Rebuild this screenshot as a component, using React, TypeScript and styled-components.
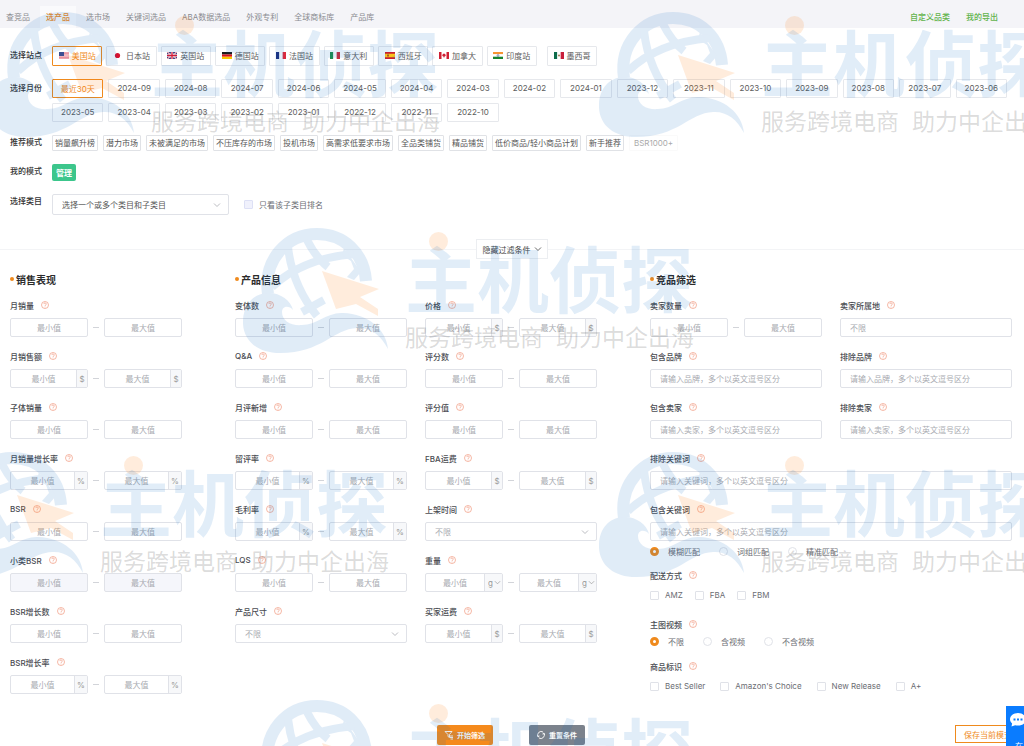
import React, { useState } from "react";
import styled, { createGlobalStyle, css } from "styled-components";

const orange = "#ef8a1d";
const line = "#e0e2e8";

const GlobalStyle = createGlobalStyle`
  *, *::before, *::after { box-sizing: border-box; }
  body { margin: 0; background: #fff; }
  body, button, input, select {
    font-family: Inter, "Noto Sans CJK SC", sans-serif;
    font-size: 8px;
  }
  button { cursor: pointer; }
`;

const Page = styled.div`
  position: relative;
  min-height: 100vh;
  overflow: hidden;
  color: #555;
`;

/* ---------- header ---------- */

const Header = styled.header`
  display: flex;
  justify-content: space-between;
  height: 28px;
  padding: 6px 26px 0 6px;
  background: #f4f4f8;
`;

const Nav = styled.nav`
  display: flex;
  gap: 16px;
`;

const NavLink = styled.a<{ $active?: boolean; $accent?: boolean }>`
  line-height: 22px;
  color: #8a8b90;
  text-decoration: none;
  white-space: nowrap;
  ${(p) => p.$active && css`
    color: ${orange};
    font-weight: 500;
    background: #fafafc;
    box-shadow: 0 0 0 6px #fafafc;
    clip-path: inset(0 -6px);
  `}
  ${(p) => p.$accent && css`
    color: #62b34c;
    font-weight: 500;
  `}
`;

/* ---------- filter rows ---------- */

const Filters = styled.section`
  display: flex;
  flex-direction: column;
  gap: 13px;
  padding: 18px 17px 0 10px;
`;

const FilterRow = styled.div`
  display: grid;
  grid-template-columns: 32px minmax(0, 1fr);
  column-gap: 10px;
  align-items: start;
`;

const RowLabel = styled.span<{ $tall?: boolean }>`
  line-height: ${(p) => (p.$tall ? 19 : 15)}px;
  font-weight: 500;
  color: #333;
  white-space: nowrap;
`;

const SiteList = styled.div`
  display: flex;
  gap: 10px;
`;

const SiteGroup = styled.div`
  display: grid;
  grid-template-columns: repeat(9, 1fr);
  gap: 4px;
  width: 485px;
`;

const chip = css<{ $active?: boolean }>`
  padding: 0 0 1px;
  border: 1px solid ${(p) => (p.$active ? orange : "#e6e8ec")};
  border-radius: 1px;
  background: #fff;
  color: ${(p) => (p.$active ? orange : "#5c5c5c")};
  white-space: nowrap;
`;

const SiteButton = styled.button<{ $active?: boolean }>`
  ${chip}
  display: flex;
  align-items: center;
  justify-content: center;
  gap: 3px;
  min-width: 50px;
  height: 20px;
`;

const MonthGrid = styled.div`
  display: grid;
  grid-template-columns: repeat(17, 1fr);
  gap: 5px;
`;

const MonthButton = styled.button<{ $active?: boolean }>`
  ${chip}
  height: 19px;
`;

const ModeList = styled.div`
  display: flex;
  flex-wrap: wrap;
  gap: 5px;
`;

const ModeButton = styled.button<{ $muted?: boolean }>`
  height: 16px;
  padding: 0 ${(p) => (p.$muted ? 4 : 2)}px;
  border: 1px solid ${(p) => (p.$muted ? "#fafafa" : "#e0e2e6")};
  border-radius: 1px;
  background: #fff;
  color: ${(p) => (p.$muted ? "#aaa" : "#555")};
  line-height: 14px;
  white-space: nowrap;
`;

const ManageButton = styled.button`
  justify-self: start;
  width: 24px;
  height: 17px;
  padding: 0;
  border: 0;
  border-radius: 2px;
  background: #3cc68c;
  color: #fff;
  font-weight: 700;
`;

const CategoryRow = styled.div`
  display: flex;
  align-items: center;
  gap: 15px;
`;

/* ---------- collapse bar ---------- */

const CollapseBar = styled.div`
  display: flex;
  align-items: center;
  margin: 24px 0 12px;
  &::before, &::after {
    content: "";
    flex: 1;
    height: 1px;
    background: #f3f4f6;
  }
`;

const CollapseButton = styled.button`
  display: flex;
  align-items: center;
  justify-content: center;
  gap: 3px;
  width: 72px;
  height: 20px;
  padding: 0;
  border: 1px solid #eceef1;
  background: #fff;
  color: #444;
`;

/* ---------- form sections ---------- */

const Sections = styled.main`
  display: grid;
  grid-template-columns: minmax(0, 172fr) minmax(0, 362fr) minmax(0, 362fr);
  column-gap: 53px;
  padding: 0 12px 0 10px;
`;

const SectionTitle = styled.h2`
  display: flex;
  align-items: center;
  gap: 2px;
  height: 16px;
  margin: 0 0 12px;
  font-size: 10px;
  font-weight: 600;
  color: #2b2b2b;
  &::before {
    content: "";
    width: 4px;
    height: 4px;
    border-radius: 50%;
    background: ${orange};
  }
`;

const FieldColumns = styled.div`
  display: grid;
  grid-template-columns: repeat(2, minmax(0, 1fr));
  column-gap: 18px;
  align-items: start;
`;

const Field = styled.div<{ $last?: boolean }>`
  margin-bottom: ${(p) => (p.$last ? 4 : 13)}px;
`;

const FieldLabel = styled.label`
  display: flex;
  align-items: center;
  gap: 7px;
  height: 12px;
  font-weight: 500;
  color: #4a4c52;
  white-space: nowrap;
`;

const Control = styled.div`
  margin-top: 7px;
`;

const Range = styled.div`
  display: flex;
  align-items: center;
  gap: 5px;
  margin-top: 7px;
  color: #aaa;
`;

const Dash = styled.span`
  width: 6px;
  height: 1px;
  background: #d2d4d9;
`;

const Box = styled.div<{ $disabled?: boolean }>`
  display: flex;
  flex: 1;
  min-width: 0;
  height: 19px;
  border: 1px solid ${line};
  border-radius: 2px;
  overflow: hidden;
  background: ${(p) => (p.$disabled ? "#f5f6fb" : "#fff")};
`;

const Input = styled.input<{ $left?: boolean }>`
  flex: 1;
  width: 100%;
  min-width: 0;
  padding: ${(p) => (p.$left ? "0 9px" : "0")};
  border: 0;
  outline: 0;
  background: transparent;
  color: #555;
  text-align: ${(p) => (p.$left ? "left" : "center")};
  &::placeholder { color: #a9abb1; opacity: 1; }
`;

const Unit = styled.span<{ $wide?: boolean }>`
  display: flex;
  align-items: center;
  justify-content: center;
  width: ${(p) => (p.$wide ? 13 : 11)}px;
  border-left: 1px solid ${line};
  background: #f7f8fa;
  color: #999;
`;

const SelectWrap = styled.div<{ $large?: boolean }>`
  position: relative;
  display: flex;
  width: ${(p) => (p.$large ? "177px" : "100%")};
  height: ${(p) => (p.$large ? 21 : 19)}px;
  border: 1px solid ${line};
  border-radius: 2px;
  background: #fff;
  color: ${(p) => (p.$large ? "#555" : "#a9abb1")};
  svg {
    position: absolute;
    right: 7px;
    top: 50%;
    margin-top: -4px;
    color: #a9abb1;
    pointer-events: none;
  }
`;

const Select = styled.select`
  flex: 1;
  appearance: none;
  padding: 0 9px;
  border: 0;
  outline: 0;
  background: transparent;
  color: inherit;
`;

const UnitSelectWrap = styled.div`
  display: flex;
  align-items: center;
  width: 18px;
  padding-left: 3px;
  border-left: 1px solid ${line};
  background: #f7f8fa;
  color: #999;
`;

const UnitSelect = styled.select`
  appearance: none;
  width: 6px;
  padding: 0;
  border: 0;
  background: transparent;
  color: inherit;
`;

const OptionGroup = styled.fieldset<{ $space: number; $gap: number }>`
  min-width: 0;
  margin: ${(p) => p.$space}px 0 0;
  padding: 0;
  border: 0;
  legend {
    display: flex;
    align-items: center;
    gap: 7px;
    height: 12px;
    margin-bottom: ${(p) => p.$gap}px;
    padding: 0;
    font-weight: 500;
    color: #4a4c52;
  }
`;

const Options = styled.div<{ $gap: number }>`
  display: flex;
  gap: ${(p) => p.$gap}px;
  height: 12px;
`;

const Option = styled.label<{ $radio?: boolean }>`
  display: flex;
  align-items: center;
  gap: ${(p) => (p.$radio ? 9 : 6)}px;
  color: #6b6d73;
  white-space: nowrap;
`;

const Tick = styled.input`
  appearance: none;
  width: 9px;
  height: 9px;
  margin: 0;
  border: 1px solid ${line};
  border-radius: ${(p) => (p.type === "radio" ? "50%" : "1px")};
  background: #fff;
  &:checked {
    border: 3px solid ${orange};
  }
`;

const SoftTick = styled(Tick)`
  border-color: #dde0f5;
  background: #f0f1fc;
`;

/* ---------- footer actions ---------- */

const Actions = styled.footer`
  display: grid;
  grid-template-columns: 1fr auto 1fr;
  align-items: start;
  margin-top: 18px;
  padding: 0 3px 0 0;
`;

const MainActions = styled.div`
  grid-column: 2;
  display: flex;
  gap: 36px;
`;

const ActionButton = styled.button<{ $primary?: boolean }>`
  display: flex;
  align-items: center;
  justify-content: center;
  gap: 3px;
  width: 56px;
  height: 20px;
  padding: 0;
  border: 0;
  border-radius: 2px;
  background: ${(p) => (p.$primary ? "#f58a1c" : "#7b828c")};
  color: #fff;
  font-size: 7px;
  font-weight: 700;
`;

const SaveButton = styled.button`
  justify-self: end;
  height: 18px;
  padding: 0 8px;
  border: 1px solid ${orange};
  background: #fff;
  color: ${orange};
  white-space: nowrap;
`;

const ChatPanel = styled.button`
  position: fixed;
  right: 0;
  bottom: 0;
  z-index: 3;
  display: flex;
  flex-direction: column;
  gap: 12px;
  width: 18px;
  height: 40px;
  padding: 7px 0 0 4px;
  border: 0;
  overflow: hidden;
  background: #0a7cff;
  color: #fff;
  line-height: 14px;
  svg { flex: none; }
  span { padding-left: 4px; }
`;

/* ---------- watermark ---------- */

const WatermarkLayer = styled.div`
  position: absolute;
  inset: 0;
  z-index: 2;
  overflow: hidden;
  pointer-events: none;
  user-select: none;
`;

const Mark = styled.div<{ $x: number; $y: number }>`
  position: absolute;
  left: ${(p) => p.$x}px;
  top: ${(p) => p.$y}px;
  display: flex;
  gap: 16px;
`;

const MarkDot = styled.div`
  width: 19px;
  height: 19px;
  margin: 4px 0 -6px 24px;
  border-radius: 50%;
  background: rgba(255, 130, 20, 0.15);
`;

const MarkName = styled.div`
  font-size: 72px;
  line-height: 72px;
  font-weight: 700;
  color: rgba(9, 103, 196, 0.12);
  white-space: nowrap;
`;

const MarkSlogan = styled.div`
  display: flex;
  gap: 13px;
  margin-top: 9px;
  font-size: 23px;
  line-height: 24px;
  font-weight: 400;
  color: rgba(100, 100, 100, 0.23);
  white-space: nowrap;
`;

/* ---------- drawings ---------- */

const Chevron = ({ size = 8 }: { size?: number }) => (
  <svg width={size} height={size} viewBox="0 0 8 8" fill="none" stroke="currentColor" strokeWidth="0.8">
    <path d="M1 2.5 4 5.5 7 2.5" />
  </svg>
);

const Help = () => (
  <svg width="8" height="8" viewBox="0 0 16 16" fill="none" stroke="#f09a80" strokeWidth="1.4">
    <circle cx="8" cy="8" r="7" />
    <path d="M5.6 6.2a2.4 2.4 0 1 1 3.4 2.2c-.7.4-1 .7-1 1.6M8 11.2v1.4" />
  </svg>
);

const flags: Record<string, React.ReactNode> = {
  us: (
    <>
      <path fill="#fff" d="M0 0h20v14H0z" />
      <path stroke="#d8455a" strokeWidth="1.2" d="M0 .6h20M0 3.2h20M0 5.8h20M0 8.4h20M0 11h20M0 13.4h20" />
      <path fill="#3c4f92" d="M0 0h10v8H0z" />
    </>
  ),
  jp: <circle cx="9" cy="7" r="5.2" fill="#d8112d" />,
  gb: (
    <>
      <path fill="#1d2f78" d="M0 0h20v14H0z" />
      <path stroke="#fff" strokeWidth="2.8" d="m0 0 20 14M20 0 0 14" />
      <path stroke="#cf1b38" strokeWidth="1" d="m0 0 20 14M20 0 0 14" />
      <path stroke="#fff" strokeWidth="4.6" d="M10 0v14M0 7h20" />
      <path stroke="#cf1b38" strokeWidth="2.6" d="M10 0v14M0 7h20" />
    </>
  ),
  de: (
    <>
      <path fill="#1b1b1b" d="M0 0h20v5H0z" />
      <path fill="#d8121f" d="M0 5h20v4.500H0z" />
      <path fill="#f8c600" d="M0 9.500h20V14H0z" />
    </>
  ),
  fr: (
    <>
      <path fill="#1c2d7c" d="M0 0h6.700v14H0z" />
      <path fill="#fff" d="M6.700 0h6.600v14H6.700z" />
      <path fill="#dd2a3c" d="M13.300 0H20v14h-6.700z" />
    </>
  ),
  it: (
    <>
      <path fill="#1d8d4c" d="M0 0h6.700v14H0z" />
      <path fill="#fff" d="M6.700 0h6.600v14H6.700z" />
      <path fill="#cc2c3b" d="M13.300 0H20v14h-6.700z" />
    </>
  ),
  es: (
    <>
      <path fill="#c8202f" d="M0 0h20v14H0z" />
      <path fill="#fbc21b" d="M0 3.500h20v7H0z" />
      <path fill="#a8572a" d="M4 5h4v4H4z" />
    </>
  ),
  ca: (
    <>
      <path fill="#fff" d="M0 0h20v14H0z" />
      <path fill="#cf1f33" d="M0 0h5v14H0zM15 0h5v14h-5zM10 2l1 2 2 0-.6 2L14 7l-3 2.500h-.6V12h-.8V9.500H9L6 7l1.600-1L7 4l2 0z" />
    </>
  ),
  in: (
    <>
      <path fill="#f79433" d="M0 0h20v4.600H0z" />
      <path fill="#fff" d="M0 4.600h20v4.800H0z" />
      <path fill="#17842f" d="M0 9.400h20V14H0z" />
      <circle cx="10" cy="7" r="1.800" fill="none" stroke="#23357f" />
    </>
  ),
  mx: (
    <>
      <path fill="#0d6c4b" d="M0 0h6.700v14H0z" />
      <path fill="#fff" d="M6.700 0h6.600v14H6.700z" />
      <path fill="#c81f39" d="M13.300 0H20v14h-6.700z" />
      <circle cx="10" cy="7" r="2" fill="#9c7a4c" />
    </>
  ),
};

const Flag = ({ code }: { code: string }) => (
  <svg width="10" height="7" viewBox="0 0 20 14">{flags[code]}</svg>
);

const MarkLogo = () => (
  <svg width="146" height="126" viewBox="0 0 146 126" fill="none">
    <g opacity="0.12" stroke="#0967c4">
      <path strokeWidth="12" d="M25 66C20 32 44 6 74 6c27 0 47 19 49 47" />
      <path
        strokeWidth="8"
        d="M45 19c3 27 12 48 29 69M64 12c5 10 12 20 21 27M29 59c19-18 47-30 82-33M59 84l22-12"
      />
      <path fill="#0967c4" stroke="none" d="M101 20l17 24-7 8-7-3 7-8-3-8-9-6z" />
      <path
        fill="#0967c4"
        stroke="none"
        d="M0 92C1 76 10 66 24 65c12-1 24 7 26 17-4-5-11-4-11 2 0 9 9 14 20 13 15 0 25-13 41-12 25 1 43 16 45 36-7-14-18-22-31-21-24 1-35 25-77 25C14 125-1 112 0 92z"
      />
    </g>
    <path fill="#ff8214" opacity="0.15" d="M79 43l57 18-19 8 18 12v7l-22-12-20 5z" />
  </svg>
);

/* ---------- composed parts ---------- */

type UnitName = "$" | "%" | "g";

const UnitCell = ({ unit }: { unit: UnitName }) =>
  unit === "g" ? (
    <UnitSelectWrap>
      <UnitSelect aria-label="单位"><option>g</option></UnitSelect>
      <Chevron size={7} />
    </UnitSelectWrap>
  ) : (
    <Unit $wide={unit === "%"}>{unit}</Unit>
  );

const RangeField = ({ label, unit, disabled }: { label: string; unit?: UnitName; disabled?: boolean }) => (
  <Field>
    <FieldLabel htmlFor={label}>{label}<Help /></FieldLabel>
    <Range>
      <Box $disabled={disabled}>
        <Input id={label} placeholder="最小值" disabled={disabled} />
        {unit && <UnitCell unit={unit} />}
      </Box>
      <Dash />
      <Box $disabled={disabled}>
        <Input aria-label={label + "最大值"} placeholder="最大值" disabled={disabled} />
        {unit && <UnitCell unit={unit} />}
      </Box>
    </Range>
  </Field>
);

const SelectField = ({ label }: { label: string }) => (
  <Field>
    <FieldLabel htmlFor={label}>{label}<Help /></FieldLabel>
    <Control>
      <SelectWrap>
        <Select id={label}><option>不限</option></Select>
        <Chevron />
      </SelectWrap>
    </Control>
  </Field>
);

const TextField = ({ label, hint, last }: { label: string; hint: string; last?: boolean }) => (
  <Field $last={last}>
    <FieldLabel htmlFor={label}>{label}<Help /></FieldLabel>
    <Control>
      <Box><Input $left id={label} placeholder={hint} /></Box>
    </Control>
  </Field>
);

const RadioOptions = ({ name, items }: { name: string; items: string[] }) => (
  <Options $gap={19}>
    {items.map((item, i) => (
      <Option $radio key={item}>
        <Tick type="radio" name={name} defaultChecked={i === 0} />{item}
      </Option>
    ))}
  </Options>
);

const CheckOptions = ({ items, gap }: { items: string[]; gap: number }) => (
  <Options $gap={gap}>
    {items.map((item) => (
      <Option key={item}><Tick type="checkbox" />{item}</Option>
    ))}
  </Options>
);

const Watermark = ({ x, y }: { x: number; y: number }) => (
  <Mark $x={x} $y={y}>
    <MarkLogo />
    <div>
      <MarkDot />
      <MarkName>主机侦探</MarkName>
      <MarkSlogan><span>服务跨境电商</span><span>助力中企出海</span></MarkSlogan>
    </div>
  </Mark>
);

/* ---------- data ---------- */

const navItems = ["查竞品", "选产品", "选市场", "关键词选品", "ABA数据选品", "外观专利", "全球商标库", "产品库"];

const sites = [
  ["us", "美国站"], ["jp", "日本站"], ["gb", "英国站"], ["de", "德国站"], ["fr", "法国站"],
  ["it", "意大利"], ["es", "西班牙"], ["ca", "加拿大"], ["in", "印度站"],
];

const months = [
  "最近30天", "2024-09", "2024-08", "2024-07", "2024-06", "2024-05", "2024-04", "2024-03", "2024-02",
  "2024-01", "2023-12", "2023-11", "2023-10", "2023-09", "2023-08", "2023-07", "2023-06",
  "2023-05", "2023-04", "2023-03", "2023-02", "2023-01", "2022-12", "2022-11", "2022-10",
];

const modes = [
  "销量飙升榜", "潜力市场", "未被满足的市场", "不压库存的市场", "投机市场", "高需求低要求市场",
  "全品类铺货", "精品铺货", "低价商品/轻小商品计划", "新手推荐",
];

const marks = [[-11, 12], [599, 12], [243, 228], [-62, 452], [599, 452], [243, 700]];

export default function App() {
  const [site, setSite] = useState("us");
  const [month, setMonth] = useState("最近30天");

  return (
    <Page lang="zh-CN">
      <GlobalStyle />
      <Header>
        <Nav>
          {navItems.map((item) => (
            <NavLink href="#" key={item} $active={item === "选产品"}>{item}</NavLink>
          ))}
        </Nav>
        <Nav>
          <NavLink href="#" $accent>自定义品类</NavLink>
          <NavLink href="#" $accent>我的导出</NavLink>
        </Nav>
      </Header>

      <Filters>
        <FilterRow>
          <RowLabel $tall>选择站点</RowLabel>
          <SiteList>
            <SiteGroup>
              {sites.map(([code, name]) => (
                <SiteButton key={code} $active={site === code} onClick={() => setSite(code)}>
                  <Flag code={code} />{name}
                </SiteButton>
              ))}
            </SiteGroup>
            <SiteButton $active={site === "mx"} onClick={() => setSite("mx")}>
              <Flag code="mx" />墨西哥
            </SiteButton>
          </SiteList>
        </FilterRow>
        <FilterRow>
          <RowLabel $tall>选择月份</RowLabel>
          <MonthGrid>
            {months.map((m) => (
              <MonthButton key={m} $active={month === m} onClick={() => setMonth(m)}>{m}</MonthButton>
            ))}
          </MonthGrid>
        </FilterRow>
        <FilterRow>
          <RowLabel>推荐模式</RowLabel>
          <ModeList>
            {modes.map((m) => <ModeButton key={m}>{m}</ModeButton>)}
            <ModeButton $muted>BSR1000+</ModeButton>
          </ModeList>
        </FilterRow>
        <FilterRow>
          <RowLabel>我的模式</RowLabel>
          <ManageButton>管理</ManageButton>
        </FilterRow>
        <FilterRow>
          <RowLabel>选择类目</RowLabel>
          <CategoryRow>
            <SelectWrap $large>
              <Select aria-label="选择类目"><option>选择一个或多个类目和子类目</option></Select>
              <Chevron />
            </SelectWrap>
            <Option><SoftTick type="checkbox" />只看该子类目排名</Option>
          </CategoryRow>
        </FilterRow>
      </Filters>

      <CollapseBar>
        <CollapseButton>隐藏过滤条件<Chevron /></CollapseButton>
      </CollapseBar>

      <Sections>
        <section>
          <SectionTitle>销售表现</SectionTitle>
          <RangeField label="月销量" />
          <RangeField label="月销售额" unit="$" />
          <RangeField label="子体销量" />
          <RangeField label="月销量增长率" unit="%" />
          <RangeField label="BSR" />
          <RangeField label="小类BSR" disabled />
          <RangeField label="BSR增长数" />
          <RangeField label="BSR增长率" unit="%" />
        </section>

        <section>
          <SectionTitle>产品信息</SectionTitle>
          <FieldColumns>
            <RangeField label="变体数" />
            <RangeField label="价格" unit="$" />
            <RangeField label="Q&A" />
            <RangeField label="评分数" />
            <RangeField label="月评新增" />
            <RangeField label="评分值" />
            <RangeField label="留评率" unit="%" />
            <RangeField label="FBA运费" unit="$" />
            <RangeField label="毛利率" unit="%" />
            <SelectField label="上架时间" />
            <RangeField label="LQS" />
            <RangeField label="重量" unit="g" />
            <SelectField label="产品尺寸" />
            <RangeField label="买家运费" unit="$" />
          </FieldColumns>
        </section>

        <section>
          <SectionTitle>竞品筛选</SectionTitle>
          <FieldColumns>
            <RangeField label="卖家数量" />
            <TextField label="卖家所属地" hint="不限" />
            <TextField label="包含品牌" hint="请输入品牌，多个以英文逗号区分" />
            <TextField label="排除品牌" hint="请输入品牌，多个以英文逗号区分" />
            <TextField label="包含卖家" hint="请输入卖家，多个以英文逗号区分" />
            <TextField label="排除卖家" hint="请输入卖家，多个以英文逗号区分" />
          </FieldColumns>
          <TextField label="排除关键词" hint="请输入关键词，多个以英文逗号区分" />
          <TextField label="包含关键词" hint="请输入关键词，多个以英文逗号区分" last />
          <RadioOptions name="match" items={["模糊匹配", "词组匹配", "精准匹配"]} />
          <OptionGroup $space={12} $gap={8}>
            <legend>配送方式<Help /></legend>
            <CheckOptions gap={12} items={["AMZ", "FBA", "FBM"]} />
          </OptionGroup>
          <OptionGroup $space={17} $gap={5}>
            <legend>主图视频<Help /></legend>
            <RadioOptions name="video" items={["不限", "含视频", "不含视频"]} />
          </OptionGroup>
          <OptionGroup $space={13} $gap={8}>
            <legend>商品标识<Help /></legend>
            <CheckOptions gap={15} items={["Best Seller", "Amazon's Choice", "New Release", "A+"]} />
          </OptionGroup>
        </section>
      </Sections>

      <Actions>
        <MainActions>
          <ActionButton $primary>
            <svg width="10" height="10" viewBox="0 0 20 20" fill="none" stroke="#fff" strokeWidth="1.800">
              <path d="M2 3h14l-5 6v6l-3-2V9zM12 12h6M12 15h6M13 18h5" />
            </svg>
            开始筛选
          </ActionButton>
          <ActionButton>
            <svg width="10" height="10" viewBox="0 0 20 20" fill="none" stroke="#fff" strokeWidth="1.800">
              <path d="M4 13a7 7 0 0 1 10-9M16 7a7 7 0 0 1-10 9M3 10l1 4 3-2M17 10l-1-4-3 2" />
            </svg>
            重置条件
          </ActionButton>
        </MainActions>
        <SaveButton>保存当前模式</SaveButton>
      </Actions>

      <WatermarkLayer aria-hidden="true">
        {marks.map(([x, y]) => <Watermark key={x + "," + y} x={x} y={y} />)}
      </WatermarkLayer>

      <ChatPanel aria-label="在线客服">
        <svg width="16" height="14" viewBox="0 0 16 14">
          <path fill="#fff" d="M8 0c4.400 0 8 2.800 8 6.300s-3.600 6.300-8 6.300c-1 0-2-.1-2.900-.4L1.500 13.500l.6-3C.8 9.400 0 7.900 0 6.300 0 2.800 3.600 0 8 0z" />
          <path fill="#0a7cff" d="M3.500 5.500h2v2h-2zM7 5.500h2v2H7zM10.500 5.500h2v2h-2z" />
        </svg>
        <span>在</span>
      </ChatPanel>
    </Page>
  );
}
